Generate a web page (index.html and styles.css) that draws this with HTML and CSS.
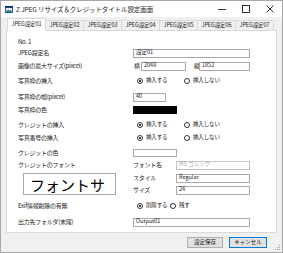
FILE: index.html
```html
<!DOCTYPE html>
<html lang="ja">
<head>
<meta charset="utf-8">
<title>Z JPEG リサイズ＆クレジットタイトル設定画面</title>
<link rel="stylesheet" href="styles.css">
</head>
<body>
<div class="window">
  <div class="titlebar">
    <svg class="app-icon" width="8" height="7" viewBox="0 0 8 7">
      <rect x="0" y="0" width="8" height="7" fill="#1f5fb0"/>
      <rect x="1" y="2" width="6" height="4" fill="#dfe9f5"/>
      <path d="M1 6 L3 3.5 L4.5 5 L5.5 4 L7 6 Z" fill="#2d7a3a"/>
      <rect x="0" y="0" width="8" height="1.5" fill="#0d2f66"/>
    </svg>
    <span class="title">Z JPEG リサイズ＆クレジットタイトル設定画面</span>
    <div class="controls">
      <div class="ctrl"><svg width="8" height="8" viewBox="0 0 8 8"><path d="M0 4.5 H8" stroke="#000" stroke-width="0.8"/></svg></div>
      <div class="ctrl"><svg width="8" height="8" viewBox="0 0 8 8"><rect x="0.5" y="0.5" width="7" height="7" fill="none" stroke="#000" stroke-width="0.8"/></svg></div>
      <div class="ctrl"><svg width="8" height="8" viewBox="0 0 8 8"><path d="M0.5 0.5 L7.5 7.5 M7.5 0.5 L0.5 7.5" stroke="#000" stroke-width="0.8"/></svg></div>
    </div>
  </div>

  <div class="tabs">
    <div class="tab active">JPEG設定01</div>
    <div class="tab">JPEG設定02</div>
    <div class="tab">JPEG設定03</div>
    <div class="tab">JPEG設定04</div>
    <div class="tab">JPEG設定05</div>
    <div class="tab">JPEG設定06</div>
    <div class="tab">JPEG設定07</div>
  </div>

  <div class="panel">
    <div class="row">
      <span class="label">No. 1</span>
    </div>
    <div class="row m1">
      <span class="label">JPEG設定名</span>
      <div class="input w-full">設定01</div>
    </div>
    <div class="row m3">
      <span class="label">画像の最大サイズ(pixcel)</span>
      <span class="unit">横</span>
      <div class="input w-size">2048</div>
      <span class="unit unit2">縦</span>
      <div class="input w-size2">1852</div>
    </div>
    <div class="row m5">
      <span class="label">写真枠の挿入</span>
      <div class="radio r-wide"><span class="dot on"></span>挿入する</div>
      <div class="radio"><span class="dot"></span>挿入しない</div>
    </div>
    <div class="row m6">
      <span class="label">写真枠の幅(pixcel)</span>
      <div class="input w-small">40</div>
    </div>
    <div class="row m3">
      <span class="label">写真枠の色</span>
      <div class="swatch black"></div>
    </div>
    <div class="row m5">
      <span class="label">クレジットの挿入</span>
      <div class="radio r-wide"><span class="dot on"></span>挿入する</div>
      <div class="radio"><span class="dot"></span>挿入しない</div>
    </div>
    <div class="row m3">
      <span class="label">写真番号の挿入</span>
      <div class="radio r-wide"><span class="dot on"></span>挿入する</div>
      <div class="radio"><span class="dot"></span>挿入しない</div>
    </div>
    <div class="row m5">
      <span class="label">クレジットの色</span>
      <div class="swatch white"></div>
    </div>

    <div class="font-section">
      <div class="font-left">
        <div class="row"><span class="label">クレジットのフォント</span></div>
        <div class="font-preview">フォントサ</div>
      </div>
      <div class="font-right">
        <div class="row">
          <span class="sublabel">フォント名</span>
          <div class="input w-font disabled">MS ゴシック</div>
        </div>
        <div class="row m3">
          <span class="sublabel">スタイル</span>
          <div class="input w-font">Regular</div>
        </div>
        <div class="row m2">
          <span class="sublabel">サイズ</span>
          <div class="input w-font">24</div>
        </div>
      </div>
    </div>

    <div class="row m-exif">
      <span class="label">Exif情報削除の有無</span>
      <div class="radio r-narrow"><span class="dot on"></span>削除する</div>
      <div class="radio"><span class="dot"></span>残す</div>
    </div>
    <div class="row m6">
      <span class="label">出力先フォルダ(末尾)</span>
      <div class="input w-full">Output01</div>
    </div>
  </div>

  <div class="buttons">
    <div class="btn b-save">設定保存</div>
    <div class="btn b-cancel default">キャンセル</div>
  </div>

  <svg class="grip" width="7" height="7" viewBox="0 0 7 7">
    <rect x="5" y="1" width="1" height="1" fill="#a0a0a0"/>
    <rect x="3" y="3" width="1" height="1" fill="#a0a0a0"/>
    <rect x="5" y="3" width="1" height="1" fill="#a0a0a0"/>
    <rect x="1" y="5" width="1" height="1" fill="#a0a0a0"/>
    <rect x="3" y="5" width="1" height="1" fill="#a0a0a0"/>
    <rect x="5" y="5" width="1" height="1" fill="#a0a0a0"/>
  </svg>
</div>
</body>
</html>
```

FILE: styles.css
```css
* {
  box-sizing: border-box;
  margin: 0;
  padding: 0;
}

html, body {
  width: 283px;
  height: 253px;
  overflow: hidden;
  background: #ffffff;
}

body {
  font-family: "Noto Sans CJK JP", "Liberation Sans", sans-serif;
  font-size: 6px;
  line-height: 1;
  color: #1a1a1a;
}

.window {
  width: 283px;
  height: 253px;
  border: 1px solid #a8a8a8;
  background: #f0f0f0;
  display: flex;
  flex-direction: column;
  position: relative;
}

/* title bar */
.titlebar {
  height: 16px;
  flex: none;
  background: #ffffff;
  display: flex;
  align-items: center;
  padding-left: 4px;
}

.app-icon {
  flex: none;
}

.title {
  font-size: 6.5px;
  margin-left: 3px;
  white-space: nowrap;
  letter-spacing: -0.1px;
}

.controls {
  margin-left: auto;
  display: flex;
}

.ctrl {
  width: 24px;
  height: 16px;
  display: flex;
  align-items: center;
  justify-content: center;
}

/* tabs */
.tabs {
  display: flex;
  align-items: flex-end;
  height: 12px;
  margin-top: 1px;
  margin-left: 6px;
  flex: none;
  position: relative;
  z-index: 2;
}

.tab {
  width: 39px;
  height: 10px;
  margin-left: -1px;
  border: 1px solid #d9d9d9;
  border-bottom: none;
  background: #f0f0f0;
  display: flex;
  align-items: center;
  justify-content: center;
  font-size: 5.5px;
  white-space: nowrap;
  letter-spacing: -0.1px;
}

.tab.active {
  margin-left: 0;
  width: 39px;
  height: 13px;
  margin-bottom: -1px;
  background: #ffffff;
  padding-bottom: 1px;
}

/* panel */
.panel {
  margin-left: 5px;
  width: 271px;
  height: 203px;
  flex: none;
  border: 1px solid #d9d9d9;
  background: #ffffff;
  padding: 6px 0 0 11px;
  display: flex;
  flex-direction: column;
  position: relative;
  z-index: 1;
}

.row {
  height: 10px;
  display: flex;
  align-items: center;
  flex: none;
}

.m1 { margin-top: 1px; }
.m2 { margin-top: 2px; }
.m3 { margin-top: 3px; }
.m5 { margin-top: 5px; }
.m6 { margin-top: 6px; }
.m-exif { margin-top: 6px; }

.label {
  width: 115px;
  flex: none;
  white-space: nowrap;
  letter-spacing: -0.25px;
}

.input {
  height: 9px;
  border: 1px solid #a9a9a9;
  background: #fff;
  display: flex;
  align-items: center;
  padding-left: 2px;
  font-size: 5.5px;
  white-space: nowrap;
  flex: none;
}

.input.disabled {
  color: #a8a8a8;
  border-color: #c4c4c4;
}

.w-full { width: 117px; }
.w-size { width: 45px; }
.w-size2 { width: 51px; }
.w-small { width: 33px; }
.w-font { width: 74px; }

.unit {
  width: 8px;
  flex: none;
  padding-left: 1px;
}

.unit2 {
  margin-left: 8px;
  width: 5px;
  padding-left: 0;
}

.radio {
  display: flex;
  align-items: center;
  gap: 3px;
  white-space: nowrap;
  flex: none;
  font-size: 5.5px;
  letter-spacing: -0.15px;
}

.r-wide {
  width: 47px;
  margin-left: 4px;
}

.r-narrow {
  width: 33px;
  margin-left: 4px;
}

.dot {
  width: 6px;
  height: 6px;
  border: 1px solid #333;
  border-radius: 50%;
  background: #fff;
  display: flex;
  align-items: center;
  justify-content: center;
  flex: none;
}

.dot.on::after {
  content: "";
  width: 2px;
  height: 2px;
  border-radius: 50%;
  background: #000;
}

.swatch {
  width: 44px;
  height: 8px;
  flex: none;
}

.swatch.black {
  background: #000;
}

.swatch.white {
  background: #fff;
  border: 1px solid #a9a9a9;
}

/* font section */
.font-section {
  display: flex;
  margin-top: 2px;
  flex: none;
}

.font-left {
  width: 115px;
  flex: none;
  display: flex;
  flex-direction: column;
}

.font-preview {
  margin-top: 3px;
  margin-left: 5px;
  width: 93px;
  height: 22px;
  border: 1px solid #a9a9a9;
  background: #fff;
  font-size: 15px;
  color: #000;
  display: flex;
  align-items: center;
  padding-left: 6px;
  white-space: nowrap;
  overflow: hidden;
}

.font-right {
  display: flex;
  flex-direction: column;
}

.sublabel {
  width: 43px;
  flex: none;
  white-space: nowrap;
  letter-spacing: -0.25px;
}

/* buttons */
.buttons {
  display: flex;
  justify-content: flex-end;
  gap: 6px;
  margin-top: 4px;
  padding-right: 15px;
  flex: none;
}

.btn {
  height: 11px;
  border: 1px solid #adadad;
  background: #e1e1e1;
  display: flex;
  align-items: center;
  justify-content: center;
  font-size: 5.5px;
  white-space: nowrap;
}

.btn.default {
  border-color: #0078d7;
}

.b-save { width: 36px; }
.b-cancel { width: 38px; }

.grip {
  position: absolute;
  right: 1px;
  bottom: 1px;
}
```
